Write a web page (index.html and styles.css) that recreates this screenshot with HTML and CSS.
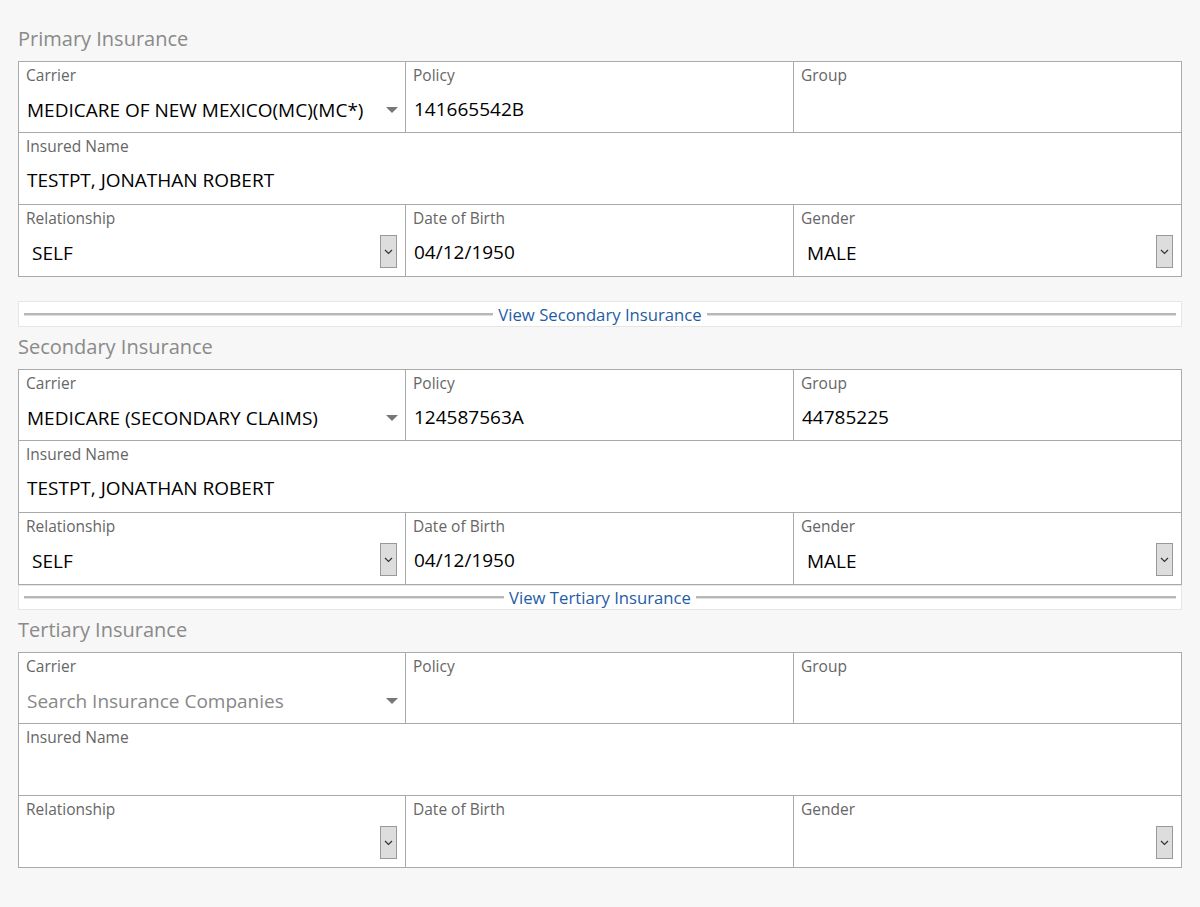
FILE: index.html
```html
<!DOCTYPE html>
<html lang="en">
<head>
    <meta charset="UTF-8">
    <title>Insurance</title>
    <link rel="stylesheet" href="styles.css">
</head>
<body>
    <div class="container">

        <!-- Primary -->
        <h2 class="section-title">Primary Insurance</h2>
        <div class="ins-grid">
            <div class="cell">
                <div class="cell-label">Carrier</div>
                <div class="cell-value combo">
                    <span>MEDICARE OF NEW MEXICO(MC)(MC*)</span>
                    <span class="caret"></span>
                </div>
            </div>
            <div class="cell">
                <div class="cell-label">Policy</div>
                <div class="cell-value">141665542B</div>
            </div>
            <div class="cell">
                <div class="cell-label">Group</div>
                <div class="cell-value"></div>
            </div>
            <div class="cell wide">
                <div class="cell-label">Insured Name</div>
                <div class="cell-value">TESTPT, JONATHAN ROBERT</div>
            </div>
            <div class="cell">
                <div class="cell-label">Relationship</div>
                <div class="cell-value select"><span>SELF</span><span class="select-btn"><svg width="9" height="6" viewBox="0 0 9 6"><path d="M1 1l3.5 3.5L8 1" fill="none" stroke="#333" stroke-width="1.2"/></svg></span></div>
            </div>
            <div class="cell">
                <div class="cell-label">Date of Birth</div>
                <div class="cell-value">04/12/1950</div>
            </div>
            <div class="cell">
                <div class="cell-label">Gender</div>
                <div class="cell-value select"><span>MALE</span><span class="select-btn"><svg width="9" height="6" viewBox="0 0 9 6"><path d="M1 1l3.5 3.5L8 1" fill="none" stroke="#333" stroke-width="1.2"/></svg></span></div>
            </div>
        </div>

        <div class="divider first">
            <span class="divider-line"></span>
            <a class="divider-link">View Secondary Insurance</a>
            <span class="divider-line"></span>
        </div>

        <!-- Secondary -->
        <h2 class="section-title">Secondary Insurance</h2>
        <div class="ins-grid">
            <div class="cell">
                <div class="cell-label">Carrier</div>
                <div class="cell-value combo">
                    <span>MEDICARE (SECONDARY CLAIMS)</span>
                    <span class="caret"></span>
                </div>
            </div>
            <div class="cell">
                <div class="cell-label">Policy</div>
                <div class="cell-value">124587563A</div>
            </div>
            <div class="cell">
                <div class="cell-label">Group</div>
                <div class="cell-value">44785225</div>
            </div>
            <div class="cell wide">
                <div class="cell-label">Insured Name</div>
                <div class="cell-value">TESTPT, JONATHAN ROBERT</div>
            </div>
            <div class="cell">
                <div class="cell-label">Relationship</div>
                <div class="cell-value select"><span>SELF</span><span class="select-btn"><svg width="9" height="6" viewBox="0 0 9 6"><path d="M1 1l3.5 3.5L8 1" fill="none" stroke="#333" stroke-width="1.2"/></svg></span></div>
            </div>
            <div class="cell">
                <div class="cell-label">Date of Birth</div>
                <div class="cell-value">04/12/1950</div>
            </div>
            <div class="cell">
                <div class="cell-label">Gender</div>
                <div class="cell-value select"><span>MALE</span><span class="select-btn"><svg width="9" height="6" viewBox="0 0 9 6"><path d="M1 1l3.5 3.5L8 1" fill="none" stroke="#333" stroke-width="1.2"/></svg></span></div>
            </div>
        </div>

        <div class="divider second">
            <span class="divider-line"></span>
            <a class="divider-link">View Tertiary Insurance</a>
            <span class="divider-line"></span>
        </div>

        <!-- Tertiary -->
        <h2 class="section-title">Tertiary Insurance</h2>
        <div class="ins-grid">
            <div class="cell">
                <div class="cell-label">Carrier</div>
                <div class="cell-value combo">
                    <span class="placeholder">Search Insurance Companies</span>
                    <span class="caret"></span>
                </div>
            </div>
            <div class="cell">
                <div class="cell-label">Policy</div>
                <div class="cell-value"></div>
            </div>
            <div class="cell">
                <div class="cell-label">Group</div>
                <div class="cell-value"></div>
            </div>
            <div class="cell wide">
                <div class="cell-label">Insured Name</div>
                <div class="cell-value"></div>
            </div>
            <div class="cell">
                <div class="cell-label">Relationship</div>
                <div class="cell-value select"><span></span><span class="select-btn"><svg width="9" height="6" viewBox="0 0 9 6"><path d="M1 1l3.5 3.5L8 1" fill="none" stroke="#333" stroke-width="1.2"/></svg></span></div>
            </div>
            <div class="cell">
                <div class="cell-label">Date of Birth</div>
                <div class="cell-value"></div>
            </div>
            <div class="cell">
                <div class="cell-label">Gender</div>
                <div class="cell-value select"><span></span><span class="select-btn"><svg width="9" height="6" viewBox="0 0 9 6"><path d="M1 1l3.5 3.5L8 1" fill="none" stroke="#333" stroke-width="1.2"/></svg></span></div>
            </div>
        </div>

    </div>
</body>
</html>
```

FILE: styles.css
```css
:root {
    --bg-color: #f7f7f7;
    --border-color: #aaaaaa;
    --label-color: #666666;
    --title-color: #8a8a8a;
    --link-color: #1f5ca6;
}

body {
    font-family: 'Open Sans', 'Liberation Sans', sans-serif;
    background-color: var(--bg-color);
    margin: 0;
    padding: 0 18px;
}

.container {
    padding-top: 25px;
}

.section-title {
    font-size: 20px;
    font-weight: normal;
    color: var(--title-color);
    margin: 0;
    height: 36px;
    line-height: 28px;
}

.ins-grid {
    display: grid;
    grid-template-columns: 386px 387px 1fr;
    grid-template-rows: 70px 71px 71px;
    gap: 1px;
    background: var(--border-color);
    border: 1px solid var(--border-color);
}

.cell {
    background: #ffffff;
    padding: 2px 7px 0 7px;
    min-width: 0;
}

.cell.wide {
    grid-column: span 3;
}

.cell-label {
    font-size: 15.5px;
    line-height: 22px;
    color: var(--label-color);
}

.cell-value {
    font-size: 19px;
    line-height: 26px;
    color: #000000;
    margin-top: 10px;
    padding-left: 1px;
    height: 26px;
}

.combo {
    display: flex;
    align-items: center;
    justify-content: space-between;
    margin-top: 11px;
}

.combo .caret {
    width: 0;
    height: 0;
    border-left: 6px solid transparent;
    border-right: 6px solid transparent;
    border-top: 6px solid #777777;
}

.placeholder {
    color: #888888;
}

.select {
    display: flex;
    align-items: center;
    justify-content: space-between;
    padding-left: 6px;
    margin-top: 6px;
    height: 33px;
}

.select span:first-child {
    padding-top: 2px;
}

.select-btn {
    width: 15px;
    height: 31px;
    background: #dddddd;
    border: 1px solid #999999;
    display: flex;
    align-items: center;
    justify-content: center;
    margin-right: 1px;
}

.divider {
    background: #ffffff;
    border: 1px solid #e6e6e6;
    height: 24px;
    display: flex;
    align-items: center;
    padding: 0 5px;
    gap: 5px;
    margin-bottom: 6px;
}

.divider.first {
    margin-top: 24px;
}

.divider.second {
    height: 23px;
}

.divider-line {
    flex: 1;
    height: 2px;
    background: #b8b8b8;
    border-bottom: 1px solid #dedede;
}

.divider-link {
    color: var(--link-color);
    font-size: 16.7px;
    cursor: pointer;
}
```
